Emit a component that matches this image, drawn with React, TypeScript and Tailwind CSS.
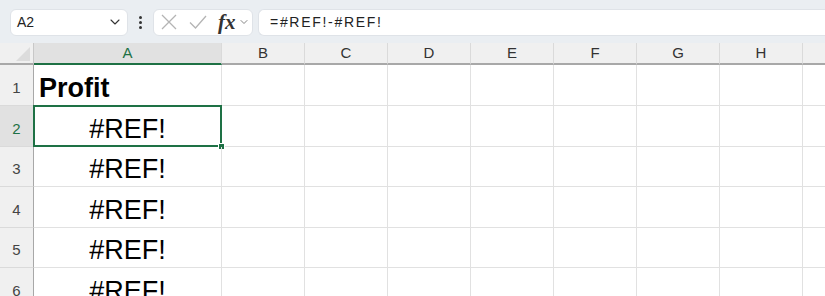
import { ChevronDown } from 'lucide-react'

const columns = [
  { label: 'A', width: 188 },
  { label: 'B', width: 83 },
  { label: 'C', width: 83 },
  { label: 'D', width: 83 },
  { label: 'E', width: 83 },
  { label: 'F', width: 83 },
  { label: 'G', width: 83 },
  { label: 'H', width: 83 },
  { label: 'I', width: 83 },
]

const rows = [
  { n: 1, h: 'h-[41px]', value: 'Profit' },
  { n: 2, h: 'h-[41px]', value: '#REF!' },
  { n: 3, h: 'h-[40px]', value: '#REF!' },
  { n: 4, h: 'h-[41px]', value: '#REF!' },
  { n: 5, h: 'h-[40px]', value: '#REF!' },
  { n: 6, h: 'h-[41px]', value: '#REF!' },
]

const font = 'font-["Liberation_Sans",Arial,sans-serif]'

const FormulaBar = () => (
  <div className="flex h-[43px] items-center bg-[#eaeef2] pl-[10px] pt-px">
    <div className="flex h-[27px] w-[118px] items-center justify-between rounded-[6px] border border-[#dfe3e8] bg-white pl-[6px] pr-[4px]">
      <span className="text-[14px] text-[#222]">A2</span>
      <ChevronDown size={16} strokeWidth={1.6} className="text-[#333]" />
    </div>
    <div className="mx-[11px] flex flex-col gap-[2px]">
      <span className="h-[3px] w-[3px] rounded-full bg-[#333]" />
      <span className="h-[3px] w-[3px] rounded-full bg-[#333]" />
      <span className="h-[3px] w-[3px] rounded-full bg-[#333]" />
    </div>
    <div className="flex h-[27px] w-[100px] items-center rounded-[6px] border border-[#dfe3e8] bg-white pl-[6px]">
      <svg width="18" height="18" viewBox="0 0 18 18" className="mr-[10px]">
        <path d="M2 2 L16 16 M16 2 L2 16" stroke="#b4b4b4" strokeWidth="1.3" fill="none" />
      </svg>
      <svg width="20" height="18" viewBox="0 0 20 18" className="mr-[10px]">
        <path d="M2 9.5 L7.5 15 L18 3" stroke="#b4b4b4" strokeWidth="1.3" fill="none" />
      </svg>
      <span className="font-['Liberation_Serif',serif] text-[21px] font-semibold italic leading-none text-[#333]">
        fx
      </span>
      <ChevronDown size={12} strokeWidth={1.6} className="ml-[2px] text-[#666]" />
    </div>
    <div className="ml-[5px] flex h-[27px] flex-1 items-center rounded-l-[6px] border border-r-0 border-[#dfe3e8] bg-white pl-[11px]">
      <span className="text-[14px] tracking-[1.7px] text-[#222]">=#REF!-#REF!</span>
    </div>
  </div>
)

const HeaderRow = () => (
  <div className="flex h-[22px] bg-[#f0f0f0]">
    <div className="relative w-[34px] shrink-0 border-b-2 border-r border-[#a8a8a8] border-r-[#c8c8c8] bg-[#f0f0f0]">
      <svg width="14" height="14" viewBox="0 0 14 14" className="absolute bottom-[2px] right-[3px]">
        <path d="M14 0 L14 14 L0 14 Z" fill="#dcdcdc" />
      </svg>
    </div>
    {columns.map((c, i) => (
      <div
        key={c.label}
        style={{ width: c.width }}
        className={`flex shrink-0 items-center justify-center border-r border-[#dadada] text-[15px] ${
          i === 0
            ? 'border-b-2 border-b-[#1e7145] bg-[#e1e1e1] text-[#1e7145]'
            : 'border-b-2 border-b-[#a8a8a8] text-[#333]'
        }`}
      >
        {c.label}
      </div>
    ))}
  </div>
)

const Row = ({ n, h, value }: { n: number; h: string; value: string }) => {
  const selected = n === 2
  return (
    <div className={`flex ${h}`}>
      <div
        className={`flex w-[34px] shrink-0 items-end justify-center border-b border-r border-b-[#dadada] border-r-[#a8a8a8] pb-[6px] text-[15px] ${
          selected ? 'bg-[#e1e1e1] text-[#1e7145]' : 'bg-[#f0f0f0] text-[#444]'
        }`}
      >
        {n}
      </div>
      <div
        className={`relative flex w-[188px] shrink-0 items-end border-b border-r border-[#e1e1e1] leading-none text-black ${
          n === 1 ? 'pb-[3px] pl-[5px] text-[27px] font-bold' : 'justify-center pb-[3px] text-[27px]'
        }`}
      >
        {value}
        {selected && (
          <>
            <div className="pointer-events-none absolute -left-px -top-px bottom-[-1px] right-[-1px] border-2 border-[#1e7145]" />
            <div className="absolute -bottom-[4px] -right-[4px] h-[7px] w-[7px] border border-white bg-[#1e7145]" />
          </>
        )}
      </div>
      {columns.slice(1).map((c) => (
        <div
          key={c.label}
          style={{ width: c.width }}
          className="shrink-0 border-b border-r border-[#e1e1e1]"
        />
      ))}
    </div>
  )
}

export default function App() {
  return (
    <div className={`h-[296px] w-[825px] overflow-hidden bg-white ${font}`}>
      <FormulaBar />
      <HeaderRow />
      {rows.map((r) => (
        <Row key={r.n} {...r} />
      ))}
    </div>
  )
}
